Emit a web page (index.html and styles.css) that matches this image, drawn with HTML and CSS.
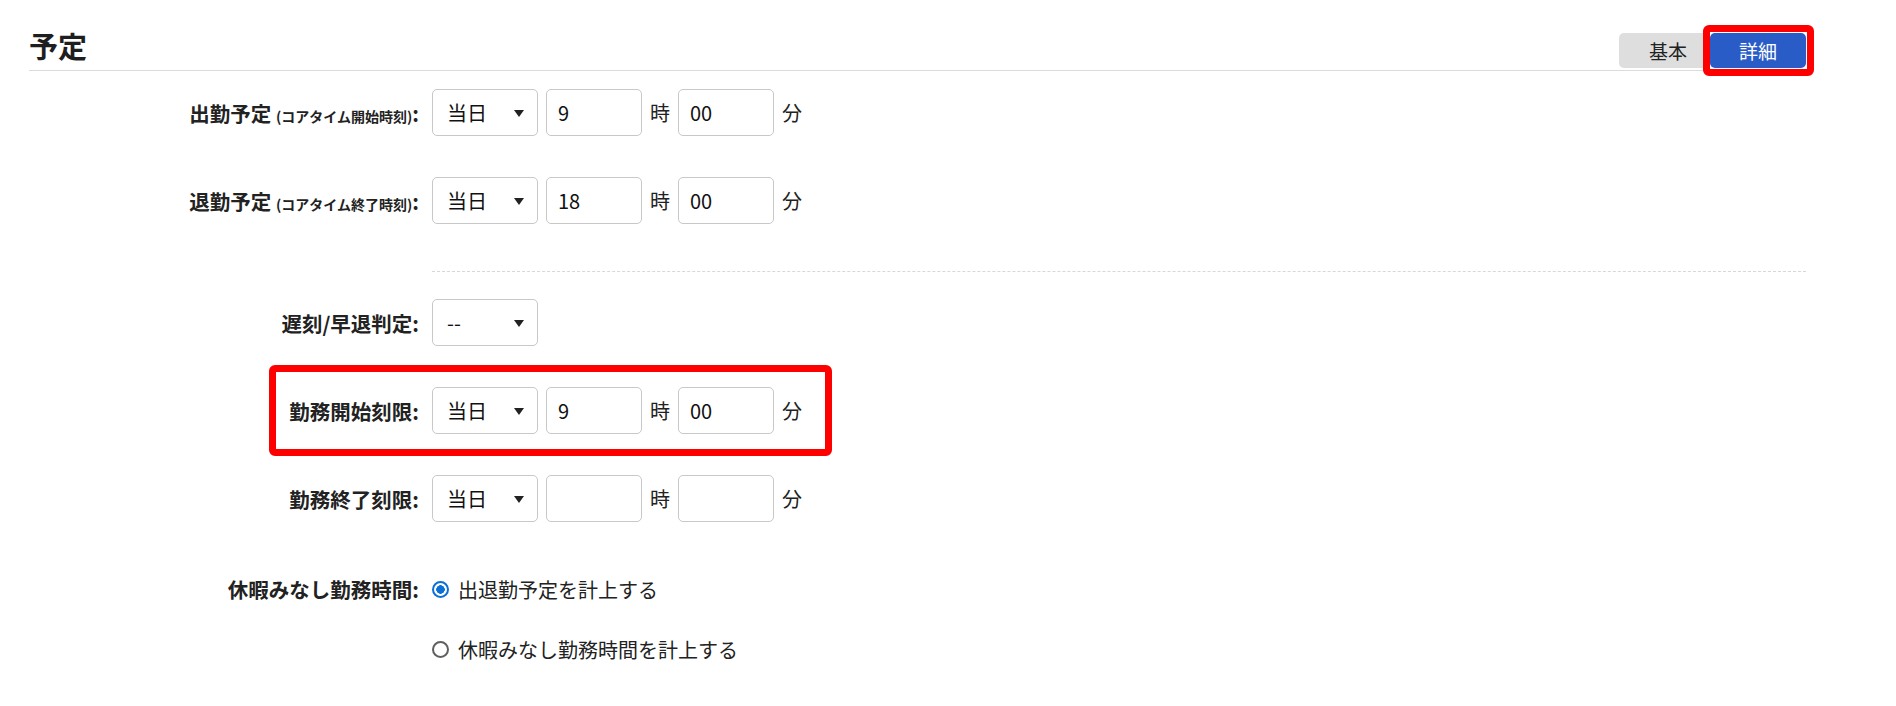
FILE: index.html
```html
<!DOCTYPE html>
<html lang="ja">
<head>
<meta charset="utf-8">
<title>予定</title>
<link rel="stylesheet" href="styles.css">
</head>
<body>
<div class="page">
  <header class="section-head">
    <h2 class="section-title">予定</h2>
    <div class="mode-toggle">
      <button class="mode-btn mode-basic" type="button">基本</button>
      <button class="mode-btn mode-detail" type="button">詳細<span class="callout callout-btn"></span></button>
    </div>
  </header>

  <div class="form">
    <div class="row">
      <label class="row-label">出勤予定 <small class="sub">(コアタイム開始時刻)</small>:</label>
      <div class="controls">
        <span class="select-wrap"><select class="select"><option>当日</option><option>翌日</option></select></span>
        <input class="num" type="text" value="9">
        <span class="unit">時</span>
        <input class="num" type="text" value="00">
        <span class="unit">分</span>
      </div>
    </div>

    <div class="row">
      <label class="row-label">退勤予定 <small class="sub">(コアタイム終了時刻)</small>:</label>
      <div class="controls">
        <span class="select-wrap"><select class="select"><option>当日</option><option>翌日</option></select></span>
        <input class="num" type="text" value="18">
        <span class="unit">時</span>
        <input class="num" type="text" value="00">
        <span class="unit">分</span>
      </div>
    </div>

    <div class="divider"></div>

    <div class="row">
      <label class="row-label">遅刻/早退判定:</label>
      <div class="controls">
        <span class="select-wrap"><select class="select"><option>--</option></select></span>
      </div>
    </div>

    <div class="row">
      <label class="row-label">勤務開始刻限:</label>
      <div class="controls">
        <span class="select-wrap"><select class="select"><option>当日</option><option>翌日</option></select></span>
        <input class="num" type="text" value="9">
        <span class="unit">時</span>
        <input class="num" type="text" value="00">
        <span class="unit">分</span>
      </div>
      <span class="callout callout-row"></span>
    </div>

    <div class="row">
      <label class="row-label">勤務終了刻限:</label>
      <div class="controls">
        <span class="select-wrap"><select class="select"><option>当日</option><option>翌日</option></select></span>
        <input class="num" type="text" value="">
        <span class="unit">時</span>
        <input class="num" type="text" value="">
        <span class="unit">分</span>
      </div>
    </div>

    <div class="row radio-row">
      <label class="row-label">休暇みなし勤務時間:</label>
      <div class="controls options">
        <label class="option"><input class="radio" type="radio" name="minashi" checked>出退勤予定を計上する</label>
        <label class="option"><input class="radio" type="radio" name="minashi">休暇みなし勤務時間を計上する</label>
      </div>
    </div>
  </div>
</div>
</body>
</html>
```

FILE: styles.css
```css
* {
  box-sizing: border-box;
}

body {
  margin: 0;
  background: #ffffff;
  font-family: "Noto Sans CJK JP", "Noto Sans", sans-serif;
  color: #222222;
}

.page {
  padding: 31px 90px 0 29px;
}

/* ---------- header ---------- */
.section-head {
  display: flex;
  justify-content: space-between;
  align-items: flex-end;
  padding-bottom: 2px;
  border-bottom: 1px solid #dcdcdc;
}

.section-title {
  margin: 0 0 9px 0;
  font-size: 29px;
  line-height: 28px;
  font-weight: 700;
  color: #1e1e1e;
}

.mode-toggle {
  display: flex;
}

.mode-btn {
  position: relative;
  height: 35px;
  border: none;
  border-radius: 5px;
  padding: 0;
  font-family: "Noto Sans CJK JP", sans-serif;
  font-size: 19px;
  line-height: 35px;
  font-weight: 400;
  cursor: pointer;
}

.mode-basic {
  width: 91px;
  padding-left: 7px;
  background: #dedede;
  color: #222222;
}

.mode-detail {
  width: 96px;
  background: #2a5cc8;
  color: #ffffff;
}

/* ---------- annotation boxes ---------- */
.callout {
  position: absolute;
  border: 7px solid #ff0000;
  border-radius: 6px;
  pointer-events: none;
}

.callout-btn {
  left: -7px;
  top: -8px;
  right: -8px;
  bottom: -8px;
}

.callout-row {
  left: 240px;
  top: -22px;
  width: 563px;
  height: 91px;
}

/* ---------- form ---------- */
.form {
  display: flex;
  flex-direction: column;
  margin-top: 18px;
}

.row {
  position: relative;
  display: flex;
  align-items: center;
  height: 47px;
  margin-bottom: 41px;
}

.row-label {
  width: 390px;
  flex-shrink: 0;
  text-align: right;
  font-size: 20.5px;
  font-weight: 700;
  color: #222222;
}

.sub {
  font-size: 14px;
  font-weight: 700;
}

.controls {
  margin-left: 13px;
  display: flex;
  align-items: center;
  gap: 8px;
}

.select-wrap {
  position: relative;
  display: block;
  width: 106px;
  height: 47px;
}

.select-wrap::after {
  content: "";
  position: absolute;
  right: 14px;
  top: 50%;
  margin-top: -3px;
  border-left: 5px solid transparent;
  border-right: 5px solid transparent;
  border-top: 7px solid #222222;
  pointer-events: none;
}

.select {
  appearance: none;
  -webkit-appearance: none;
  width: 100%;
  height: 100%;
  border: 1px solid #c8c8c8;
  border-radius: 5px;
  background: #ffffff;
  padding: 0 0 0 14px;
  font-family: "Noto Sans CJK JP", sans-serif;
  font-size: 20px;
  color: #111111;
  outline: none;
}

.num {
  width: 96px;
  height: 47px;
  border: 1px solid #c8c8c8;
  border-radius: 5px;
  padding: 0 0 0 11px;
  font-family: "Noto Sans CJK JP", sans-serif;
  font-size: 20px;
  color: #111111;
  outline: none;
}

.unit {
  width: 20px;
  font-size: 20px;
  color: #222222;
}

.divider {
  margin: 6px 0 27px 403px;
  border-top: 1px dashed #d8d8d8;
}

/* ---------- radios ---------- */
.radio-row {
  height: auto;
  align-items: flex-start;
  margin-top: 11px;
}

.radio-row .row-label {
  line-height: 30px;
}

.options {
  flex-direction: column;
  align-items: flex-start;
  gap: 30px;
}

.option {
  display: flex;
  align-items: center;
  height: 30px;
  font-size: 20px;
  color: #222222;
}

.radio {
  appearance: none;
  -webkit-appearance: none;
  flex-shrink: 0;
  width: 17px;
  height: 17px;
  margin: 0 9px 0 0;
  border: 2px solid #5f5f5f;
  border-radius: 50%;
  background: #ffffff;
}

.radio:checked {
  border: 2px solid #0a6fd6;
  background: radial-gradient(circle, #0a6fd6 0 4px, #ffffff 4.5px);
}
```
